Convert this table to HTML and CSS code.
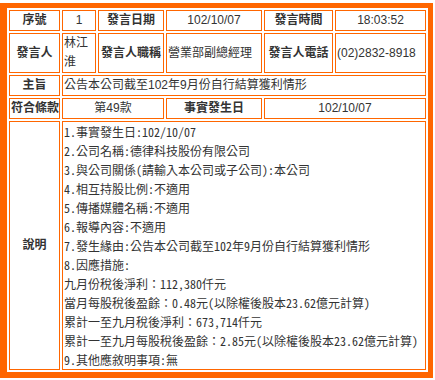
FILE: index.html
```html
<!DOCTYPE html>
<html>
<head>
<meta charset="utf-8">
<link rel="stylesheet" href="styles.css">
</head>
<body>
<div class="frame">
<table class="info">
<colgroup>
<col class="c1"><col class="c2"><col class="c3"><col class="c4"><col class="c5"><col class="c6">
</colgroup>
<tr class="r1">
<th>序號</th><td class="ctr">1</td><th>發言日期</th><td class="ctr">102/10/07</td><th>發言時間</th><td class="ctr">18:03:52</td>
</tr>
<tr class="r2">
<th>發言人</th><td>林江淮</td><th>發言人職稱</th><td>營業部副總經理</td><th>發言人電話</th><td>(02)2832-8918</td>
</tr>
<tr class="r1">
<th>主旨</th><td colspan="5">公告本公司截至102年9月份自行結算獲利情形</td>
</tr>
<tr class="r1">
<th>符合條款</th><td colspan="2" class="ctr">第49款</td><th>事實發生日</th><td colspan="2" class="ctr">102/10/07</td>
</tr>
<tr>
<th>說明</th><td colspan="5" class="desc"><pre>1.事實發生日:102/10/07
2.公司名稱:德律科技股份有限公司
3.與公司關係(請輸入本公司或子公司):本公司
4.相互持股比例:不適用
5.傳播媒體名稱:不適用
6.報導內容:不適用
7.發生緣由:公告本公司截至102年9月份自行結算獲利情形
8.因應措施:
九月份稅後淨利：112,380仟元
當月每股稅後盈餘：0.48元(以除權後股本23.62億元計算)
累計一至九月稅後淨利：673,714仟元
累計一至九月每股稅後盈餘：2.85元(以除權後股本23.62億元計算)
9.其他應敘明事項:無</pre></td>
</tr>
</table>
</div>
</body>
</html>
```

FILE: styles.css
```css
html, body {
  margin: 0;
  padding: 0;
  background: #ffffff;
}
body {
  padding-top: 3px;
  font-family: "Liberation Sans", "Noto Sans CJK TC", sans-serif;
  font-size: 12px;
  color: #333333;
}
.frame {
  width: 421px;
  border-style: solid;
  border-color: #ff6600;
  border-width: 5px 5px 6px 7px;
}
.info {
  border-collapse: separate;
  border-spacing: 2px;
  table-layout: fixed;
  width: 421px;
}
.c1 { width: 51px; }
.c2 { width: 34px; }
.c3 { width: 66px; }
.c4 { width: 96px; }
.c5 { width: 69px; }
.c6 { width: 91px; }
.info th, .info td {
  border: 1px solid #ff6600;
  padding: 0 1px;
  line-height: 19px;
  font-size: 12px;
  text-align: left;
  vertical-align: middle;
  overflow: hidden;
}
.info th {
  text-align: center;
  font-weight: bold;
  white-space: nowrap;
}
.info td.ctr {
  text-align: center;
}
.r1 th, .r1 td {
  height: 19px;
}
.r2 th, .r2 td {
  height: 38px;
}
.desc pre {
  margin: 0;
  font-family: "Noto Sans Mono CJK TC", "Noto Sans CJK TC", "Liberation Mono", monospace;
  font-size: 12px;
  line-height: 19px;
  color: #333333;
  white-space: pre;
}
```
